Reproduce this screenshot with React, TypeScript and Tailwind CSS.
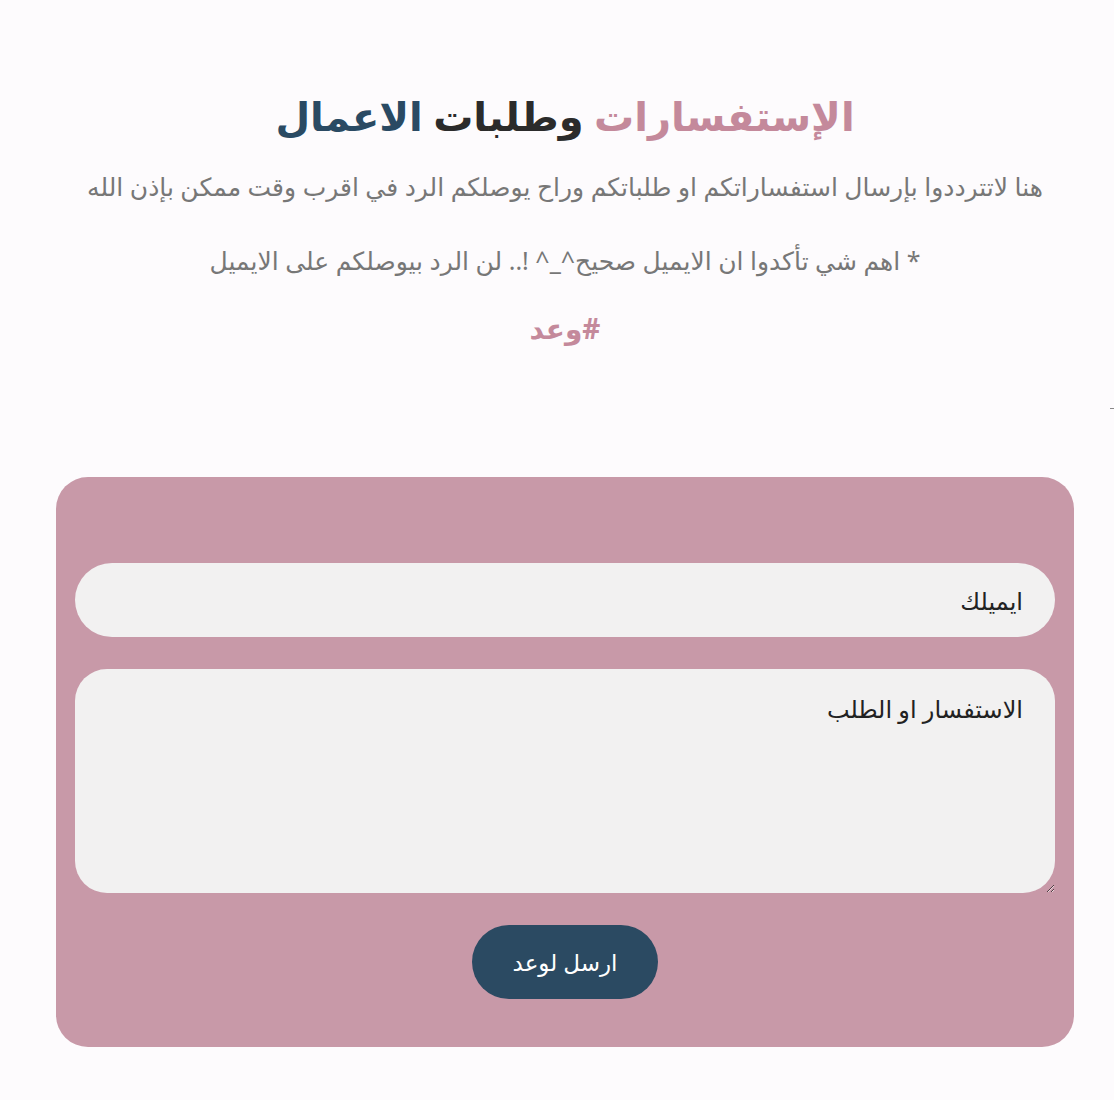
import React from "react";

const font = { fontFamily: '"Noto Sans", "DejaVu Sans", sans-serif' };

export default function App() {
  return (
    <div dir="rtl" className="min-h-[1100px] w-full bg-[#fdfbfd] pl-[16px] text-center" style={font}>
      {/* العنوان */}
      <div className="pt-[84px]">
        <h1 className="text-[40px] font-bold leading-[64px]">
          <span className="text-[#c4899b]">الإستفسارات</span>{" "}
          <span className="text-[#2b2b2b]">وطلبات</span>{" "}
          <span className="text-[#2a4a63]">الاعمال</span>
        </h1>
        <p className="mt-[22px] text-[25px] leading-[32px] text-[#777777]">
          هنا لاتترددوا بإرسال استفساراتكم او طلباتكم وراح يوصلكم الرد في اقرب وقت ممكن بإذن الله
        </p>
        <p className="mt-[42px] text-[25px] leading-[32px] text-[#777777]">
          * اهم شي تأكدوا ان الايميل صحيح^_^ !.. لن الرد بيوصلكم على الايميل
        </p>
        <p className="mt-[34px] text-[28px] font-bold leading-[36px] text-[#c4899b]">#وعد</p>
      </div>

      <div className="flex justify-start pt-[62px]">
        <div className="h-px w-[4px] bg-[#888888]" />
      </div>

      {/* النموذج */}
      <div className="px-[40px] pt-[68px]">
        <form className="mx-auto flex w-[1018px] flex-col items-center gap-[32px] rounded-[32px] bg-[#c899a8] px-[19px] pb-[48px] pt-[86px]">
          <input
            type="email"
            placeholder="ايميلك"
            className="h-[74px] w-full rounded-full bg-[#f2f1f1] px-[32px] text-[24px] text-[#222] outline-none placeholder:text-[#222]"
            style={font}
          />
          <textarea
            dir="ltr"
            placeholder="الاستفسار او الطلب"
            className="h-[224px] w-full resize-y rounded-[32px] bg-[#f2f1f1] px-[32px] py-[22px] text-right text-[24px] text-[#222] outline-none placeholder:text-[#222]"
            style={font}
          />
          <button
            type="button"
            className="h-[74px] w-[186px] rounded-full bg-[#2b4a62] text-[23px] text-white"
            style={font}
          >
            ارسل لوعد
          </button>
        </form>
      </div>
    </div>
  );
}
